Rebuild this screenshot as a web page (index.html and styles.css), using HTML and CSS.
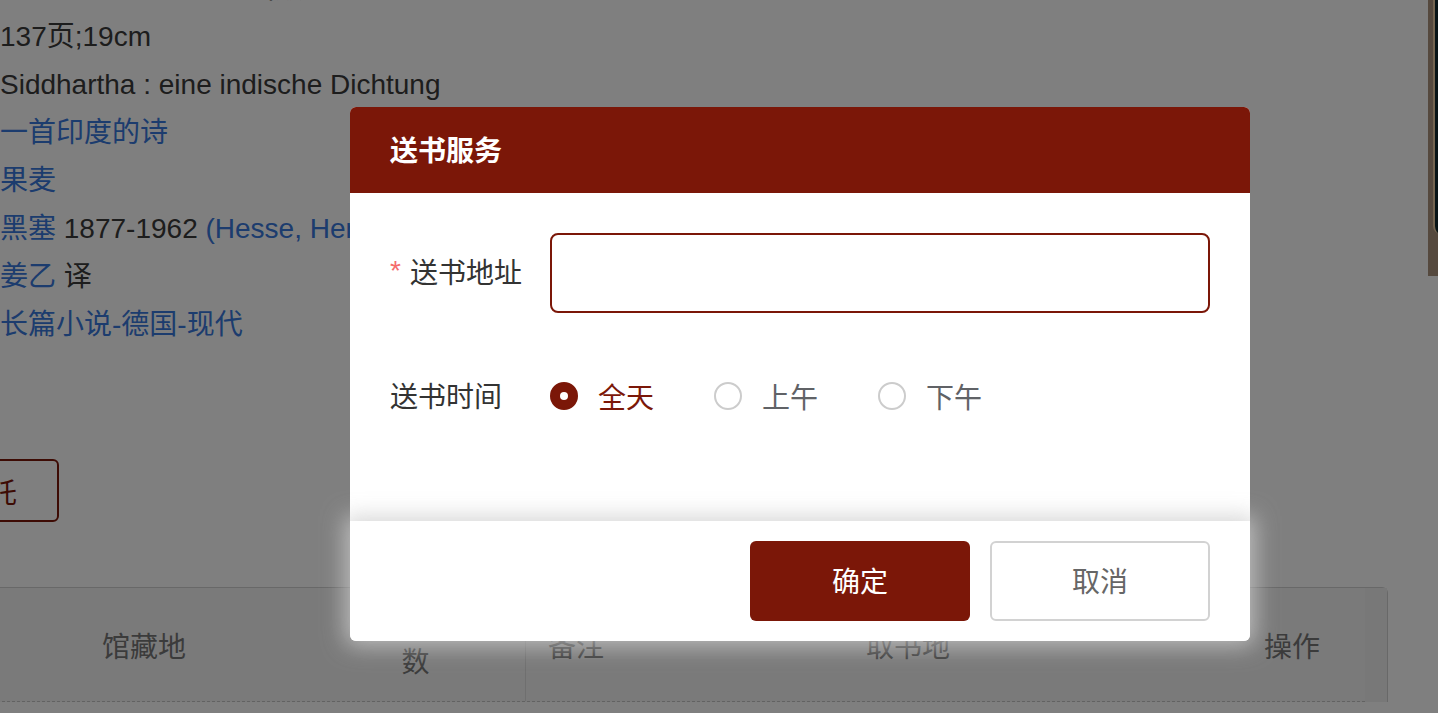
FILE: index.html
```html
<!DOCTYPE html>
<html lang="zh-CN">
<head>
<meta charset="utf-8">
<title>送书服务</title>
<link rel="stylesheet" href="styles.css">
</head>
<body>
<div class="page">
  <main class="main">
    <div class="info">
      <p class="line">ISBN 978-7-201-11 出版</p>
      <p class="line">137页;19cm</p>
      <p class="line">Siddhartha : eine indische Dichtung</p>
      <p class="line"><a class="link">一首印度的诗</a></p>
      <p class="line"><a class="link">果麦</a></p>
      <p class="line"><a class="link">黑塞</a> 1877-1962 <a class="link">(Hesse, Hermann)</a></p>
      <p class="line"><a class="link">姜乙</a> 译</p>
      <p class="line"><a class="link">长篇小说-德国-现代</a></p>
    </div>
    <div class="actions">
      <button class="btn-outline" type="button">委托</button>
    </div>
    <div class="table">
      <div class="thead">
        <div class="th th-center">馆藏地</div>
        <div class="th th-center th-two">可借册<br>数</div>
        <div class="th th-left">备注</div>
        <div class="th th-center">取书地</div>
        <div class="th th-right">操作</div>
      </div>
      <div class="gutter"></div>
    </div>
  </main>
  <div class="cover"><div class="cover-inner"></div></div>
</div>

<div class="mask"></div>

<div class="dialog">
  <div class="dlg-head">送书服务</div>
  <div class="dlg-body">
    <div class="form-item">
      <label class="form-label"><span class="req">*</span>送书地址</label>
      <input class="input" type="text">
    </div>
    <div class="form-item form-item-last">
      <label class="form-label">送书时间</label>
      <div class="radio-group">
        <span class="radio checked"><span class="radio-dot"></span>全天</span>
        <span class="radio"><span class="radio-dot"></span>上午</span>
        <span class="radio"><span class="radio-dot"></span>下午</span>
      </div>
    </div>
  </div>
  <div class="dlg-foot">
    <button class="btn btn-primary" type="button">确定</button>
    <button class="btn btn-default" type="button">取消</button>
  </div>
</div>
</body>
</html>
```

FILE: styles.css
```css
html, body {
  margin: 0;
  padding: 0;
  height: 100%;
  overflow: hidden;
}

body {
  font-family: "Liberation Sans", "Noto Sans CJK SC", sans-serif;
  font-size: 28px;
  color: #3a3a3a;
  background: #ffffff;
}

.page {
  display: flex;
  width: 1438px;
  height: 713px;
  overflow: hidden;
}

.main {
  flex: 0 0 1428px;
  min-width: 0;
}

.cover {
  flex: 0 0 120px;
  height: 276px;
  box-sizing: border-box;
  padding-left: 5px;
  background: #aa927c;
}

.cover-inner {
  height: 234px;
  border-left: 2px solid #e6c8a0;
  border-bottom-left-radius: 8px;
  background: #10282c;
}

.info {
  margin-top: -35px;
}

.line {
  margin: 0;
  line-height: 48px;
  white-space: nowrap;
}

.link {
  color: #3878dc;
}

.actions {
  display: flex;
  margin-top: 110px;
  height: 63px;
}

.btn-outline {
  margin-left: -81px;
  height: 63px;
  padding: 0 40px;
  border: 2px solid #7b1708;
  border-radius: 6px;
  background: #ffffff;
  color: #7b1708;
  font: inherit;
  font-size: 28px;
  white-space: nowrap;
}

.table {
  display: flex;
  margin-top: 65px;
  margin-left: -18px;
  width: 1405px;
  border-top: 1px solid #d0d0d0;
  border-right: 1px solid #d0d0d0;
  border-top-right-radius: 6px;
}

.thead {
  flex: 0 0 1383px;
  display: grid;
  grid-template-columns: 324px 219px 250px 266px 324px;
  height: 114px;
  box-sizing: border-box;
  border-bottom: 1px dashed #c4c4c4;
  background: #f5f5f5;
  color: #777777;
}

.th {
  display: flex;
  align-items: center;
  white-space: nowrap;
}

.th-center {
  justify-content: center;
  text-align: center;
}

.th-two {
  line-height: 36px;
}

.th-left {
  border-left: 1px solid #dedede;
  padding-left: 22px;
}

.th-right {
  justify-content: flex-end;
  padding-right: 45px;
}

.gutter {
  flex: 1;
  height: 114px;
  background: #f1f1f1;
}

.mask {
  position: fixed;
  inset: 0;
  background: rgba(0, 0, 0, 0.5);
}

.dialog {
  position: fixed;
  left: 350px;
  top: 107px;
  width: 900px;
  background: #ffffff;
  border-radius: 6px;
  font-family: "Noto Sans CJK SC", "Liberation Sans", sans-serif;
}

.dlg-head {
  display: flex;
  align-items: center;
  height: 86px;
  box-sizing: border-box;
  padding: 0 40px 3px;
  background: #7b1708;
  border-radius: 6px 6px 0 0;
  color: #ffffff;
  font-size: 28px;
  font-weight: bold;
}

.dlg-body {
  padding: 40px 40px 84px;
}

.form-item {
  display: flex;
  align-items: center;
  height: 80px;
  margin-bottom: 44px;
}

.form-item-last {
  margin-bottom: 0;
}

.form-label {
  flex: 0 0 160px;
  display: flex;
  align-items: center;
  padding-bottom: 4px;
  color: #333333;
  font-size: 28px;
}

.req {
  color: #f56c6c;
  margin-right: 9px;
  font-family: "Liberation Sans", sans-serif;
}

.input {
  flex: 1;
  min-width: 0;
  height: 80px;
  box-sizing: border-box;
  border: 2px solid #7b1708;
  border-radius: 8px;
  outline: none;
  padding: 0 20px;
  font: inherit;
  background: #ffffff;
}

.radio-group {
  display: flex;
  align-items: center;
  padding-bottom: 3px;
}

.radio {
  display: flex;
  align-items: center;
  margin-right: 60px;
  color: #606266;
  font-size: 28px;
}

.radio-dot {
  display: flex;
  align-items: center;
  justify-content: center;
  width: 28px;
  height: 28px;
  box-sizing: border-box;
  margin-right: 20px;
  border: 2px solid #cccccc;
  border-radius: 50%;
  background: #ffffff;
}

.radio.checked {
  color: #7b1708;
}

.radio.checked .radio-dot {
  border-color: #7b1708;
  background: #7b1708;
}

.radio.checked .radio-dot::after {
  content: "";
  width: 8px;
  height: 8px;
  border-radius: 50%;
  background: #ffffff;
}

.dlg-foot {
  display: flex;
  justify-content: flex-end;
  gap: 20px;
  height: 120px;
  box-sizing: border-box;
  padding: 20px 40px;
  background: #ffffff;
  border-radius: 0 0 6px 6px;
  box-shadow: 0 0 22px 5px rgba(205, 205, 205, 0.8);
}

.btn {
  width: 220px;
  height: 80px;
  box-sizing: border-box;
  padding: 0 0 3px;
  border-radius: 6px;
  font: inherit;
  font-size: 28px;
}

.btn-primary {
  border: none;
  background: #7b1708;
  color: #ffffff;
}

.btn-default {
  border: 2px solid #d2d2d2;
  background: #ffffff;
  color: #666666;
}
```
